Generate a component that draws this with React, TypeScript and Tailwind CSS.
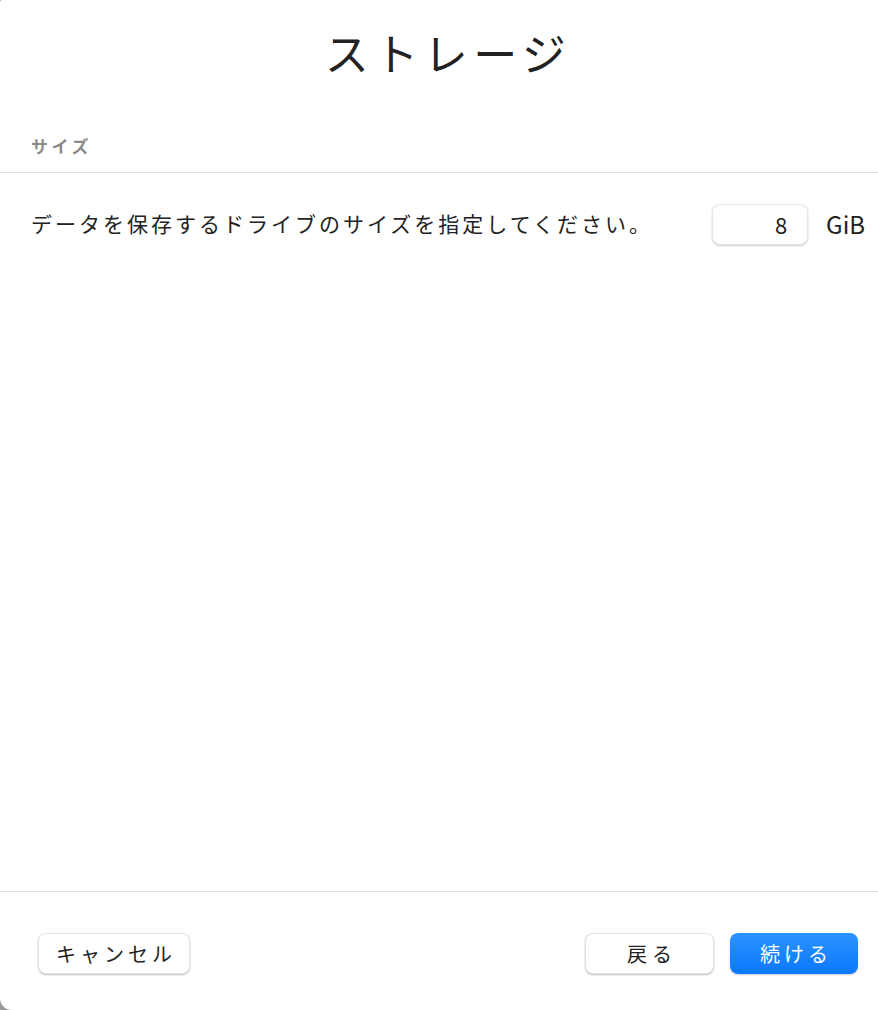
import React from "react";

const font = { fontFamily: '"Noto Sans CJK JP", "Noto Sans", sans-serif' };

export default function App() {
  return (
    <div className="w-[878px] h-[1010px] bg-[#9a9a9a]" style={font}>
      <div className="w-full h-full bg-white rounded-bl-[12px] rounded-tl-[2px] flex flex-col">
        <div className="h-[112px] flex items-center justify-center pb-[8px] pl-[18px]">
          <h1 className="text-[44px] leading-none text-[#222] tracking-[5.5px]">ストレージ</h1>
        </div>
        <div className="h-[61px] pl-[31px] pt-[21px] text-[17px] font-semibold text-[#8a8a8a] tracking-[3.5px] border-b border-[#e0e0e0]">
          サイズ
        </div>
        <div className="flex items-center h-[102px] pl-[31px] pr-[13px]">
          <div className="flex-1 text-[21px] text-[#222] tracking-[3px] whitespace-nowrap">
            データを保存するドライブのサイズを指定してください。
          </div>
          <div className="w-[96px] h-[41px] rounded-[8px] bg-white border border-[#e6e6e6] shadow-[0_1px_2px_rgba(0,0,0,0.2)] flex items-center justify-end pr-[20px] text-[22px] text-[#222]">
            8
          </div>
          <div className="ml-[18px] text-[24px] text-[#222]">GiB</div>
        </div>
        <div className="flex-1" />
        <div className="border-t border-[#e0e0e0] h-[119px] flex items-center px-[38px] pr-[20px] pt-[5px]">
          <button className="w-[152px] h-[41px] rounded-[8px] bg-white border border-[#e3e3e3] shadow-[0_1px_2px_rgba(0,0,0,0.25)] text-[20px] text-[#222] tracking-[4px] pl-[4px]">
            キャンセル
          </button>
          <div className="flex-1" />
          <button className="w-[129px] h-[41px] rounded-[8px] bg-white border border-[#e3e3e3] shadow-[0_1px_2px_rgba(0,0,0,0.25)] text-[20px] text-[#222] tracking-[5px] pl-[5px]">
            戻る
          </button>
          <button className="ml-[16px] w-[128px] h-[41px] rounded-[8px] bg-gradient-to-b from-[#2a92ff] to-[#0a78ff] shadow-[0_1px_2px_rgba(0,0,0,0.2)] text-[20px] text-white tracking-[4px] pl-[4px]">
            続ける
          </button>
        </div>
      </div>
    </div>
  );
}
